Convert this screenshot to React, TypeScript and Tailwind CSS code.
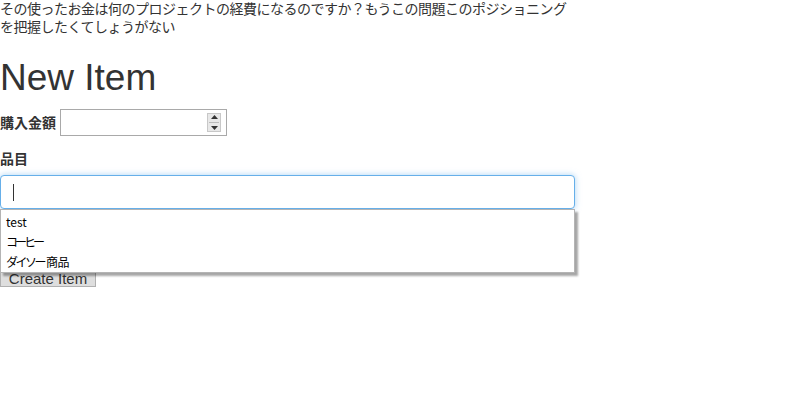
import React from "react";

export default function App() {
  return (
    <div
      className="w-[800px] h-[419px] bg-white text-[#333] overflow-hidden"
      style={{ fontFamily: '"Liberation Sans", Arial, "Noto Sans CJK JP", sans-serif' }}
    >
      <div className="w-[575px]">
        <p className="text-[14px] leading-[18px] m-0 tracking-[-0.5px] whitespace-nowrap">
          その使ったお金は何のプロジェクトの経費になるのですか？もうこの問題このポジショニング
          <br />
          を把握したくてしょうがない
        </p>
        <h1 className="text-[37px] leading-[40px] mt-[22px] font-normal">New Item</h1>

        <div className="mt-[11px] flex items-center">
          <label className="text-[14px] leading-[20px] font-bold mr-[4px]">購入金額</label>
          <div className="relative w-[167px] h-[27px] border border-[#a9a9a9] bg-white">
            <div className="absolute right-[5px] top-[3px] w-[14px] h-[19px] border border-[#c8c8c8] bg-[#e8e8e8] flex flex-col items-center justify-center gap-[3px]">
              <svg width="7" height="4" viewBox="0 0 7 4">
                <path d="M0 4 L3.5 0 L7 4 Z" fill="#333" />
              </svg>
              <div className="w-[10px] h-px bg-[#bbb]" />
              <svg width="7" height="4" viewBox="0 0 7 4">
                <path d="M0 0 L3.5 4 L7 0 Z" fill="#333" />
              </svg>
            </div>
          </div>
        </div>

        <label className="block mt-[13px] text-[14px] leading-[20px] font-bold">品目</label>
        <div className="relative mt-[6px]">
          <div className="h-[34px] w-[575px] border border-[#66afe9] rounded-[4px] bg-white shadow-[0_0_6px_rgba(102,175,233,0.55)] flex items-center pl-[12px]">
            <div className="w-px h-[17px] bg-[#333]" />
          </div>
          <div
            className="absolute left-0 top-[34px] z-10 w-[575px] h-[64px] bg-white border border-[#b4b4b4] shadow-[3px_3px_2px_rgba(0,0,0,0.35)] pt-[2px] pl-[5px] text-black text-[12px] leading-[20px]"
            style={{ fontFamily: '"Noto Sans CJK JP", "Liberation Sans", sans-serif' }}
          >
            <div>test</div>
            <div className="tracking-[-3px]">コーヒー</div>
            <div>
              <span className="tracking-[-2.5px]">ダイソー</span>
              <span className="tracking-[-0.5px] ml-[2px]">商品</span>
            </div>
          </div>
        </div>

        <button className="mt-[62px] w-[96px] h-[16px] bg-[#dedede] border border-[#b0b0b0] text-[15px] leading-[14px] text-[#333] flex items-end justify-center pb-0">
          Create Item
        </button>
      </div>
    </div>
  );
}
